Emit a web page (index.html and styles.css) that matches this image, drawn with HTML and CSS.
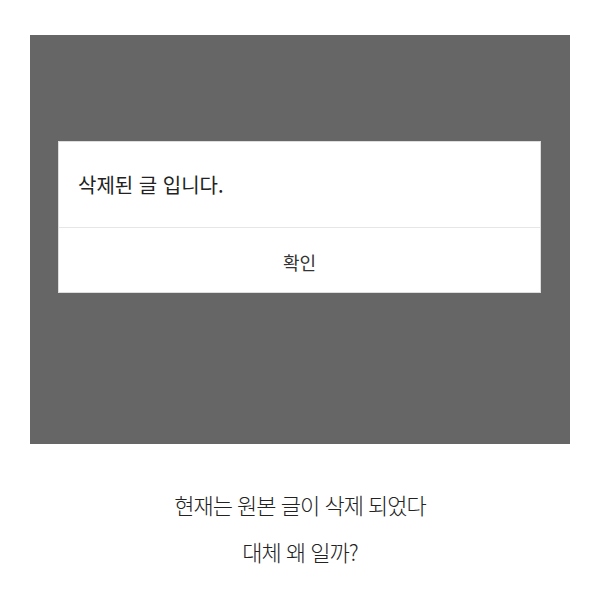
FILE: index.html
```html
<!DOCTYPE html>
<html lang="ko">
<head>
    <meta charset="UTF-8">
    <title>삭제된 글</title>
    <link rel="stylesheet" href="styles.css">
</head>
<body>
    <div class="screen">
        <div class="dialog">
            <div class="dialog-msg">삭제된 글 입니다.</div>
            <div class="dialog-btn">확인</div>
        </div>
    </div>
    <div class="caption">
        <p>현재는 원본 글이 삭제 되었다</p>
        <p>대체 왜 일까?</p>
    </div>
</body>
</html>
```

FILE: styles.css
```css
body{margin:0;background:#fff;font-family:"Noto Sans CJK KR","Noto Sans",sans-serif;color:#222;}
.screen{margin:35px 30px 0;height:409px;background:#666;padding:106px 29px 0 28px;box-sizing:border-box;}
.dialog{background:#fff;border:1px solid #ddd;}
.dialog-msg{height:85px;padding-left:19px;font-size:20px;line-height:86px;color:#222;border-bottom:1px solid #e6e6e6;}
.dialog-btn{height:64px;line-height:68px;text-align:center;font-size:18px;color:#333;}
.caption{text-align:center;padding-top:37px;}
.caption p{margin:0;font-size:22px;font-weight:300;line-height:47px;letter-spacing:-1px;color:#222;}
```
